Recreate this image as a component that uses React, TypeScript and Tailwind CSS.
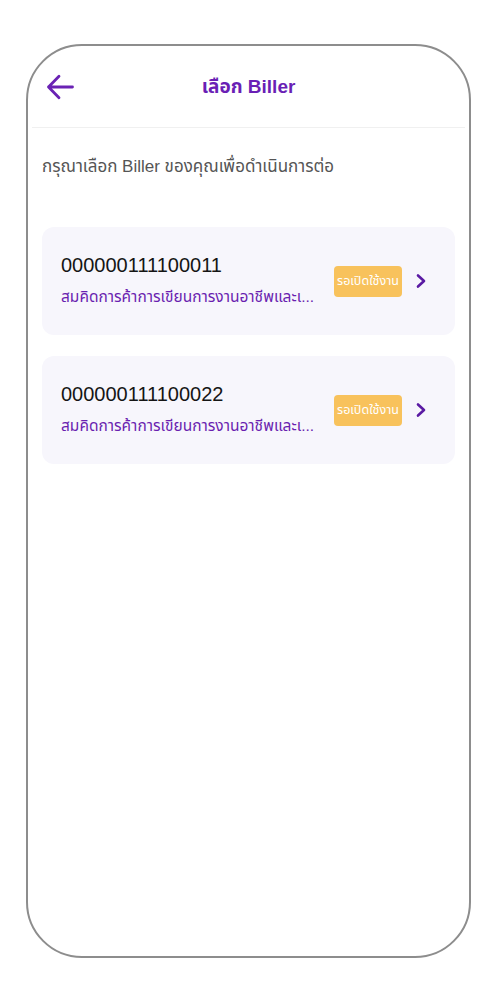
import React from "react";

const font = { fontFamily: '"Liberation Sans", "Noto Sans", "Noto Sans Thai", sans-serif' };

function Card({ id }: { id: string }) {
  return (
    <div className="mx-[14px] h-[108px] rounded-[12px] bg-[#f7f6fc] flex items-center pl-[19px] pr-[28px]">
      <div className="flex-1 min-w-0 flex flex-col">
        <div className="text-[20px] leading-[24px] text-[#151515]">{id}</div>
        <div className="mt-[8px] text-[15.5px] leading-[24px] text-[#6a1fb0] whitespace-nowrap">
          สมคิดการค้าการเขียนการงานอาชีพและเ...
        </div>
      </div>
      <div className="w-[68px] h-[31px] rounded-[4px] bg-[#f8c25c] flex items-center justify-center text-white text-[12.5px]">
        รอเปิดใช้งาน
      </div>
      <svg className="ml-[13px]" width="12" height="16" viewBox="0 0 12 16" fill="none">
        <path d="M3 2.5 L9 8 L3 13.5" stroke="#5a1aa3" strokeWidth="2.6" strokeLinecap="round" strokeLinejoin="round" />
      </svg>
    </div>
  );
}

export default function App() {
  return (
    <div className="w-[500px] h-[1004px] bg-white pt-[44px] pl-[26px]" style={font}>
      <div className="w-[445px] h-[914px] border-2 border-[#8d8d8d] rounded-[56px] flex flex-col">
        <div className="pt-[23px] h-[36px] box-content relative flex items-center justify-center">
          <svg className="absolute left-[18px] top-[28px]" width="28" height="26" viewBox="0 0 28 26" fill="none">
            <path d="M26.5 13 H2.5 M13 2.2 L2.5 13 L13 23.8" stroke="#6a22b4" strokeWidth="2.8" strokeLinecap="round" strokeLinejoin="round" />
          </svg>
          <div className="text-[19px] font-bold text-[#6a1fb5]">เลือก Biller</div>
        </div>
        <div className="mt-[22px] mx-[4px] h-[1px] bg-[#f0f0f0]" />
        <div className="mt-[27px] pl-[14px] text-[17px] leading-[24px] text-[#555555]">
          กรุณาเลือก Biller ของคุณเพื่อดำเนินการต่อ
        </div>
        <div className="mt-[48px] flex flex-col gap-[21px]">
          <Card id="000000111100011" />
          <Card id="000000111100022" />
        </div>
      </div>
    </div>
  );
}
